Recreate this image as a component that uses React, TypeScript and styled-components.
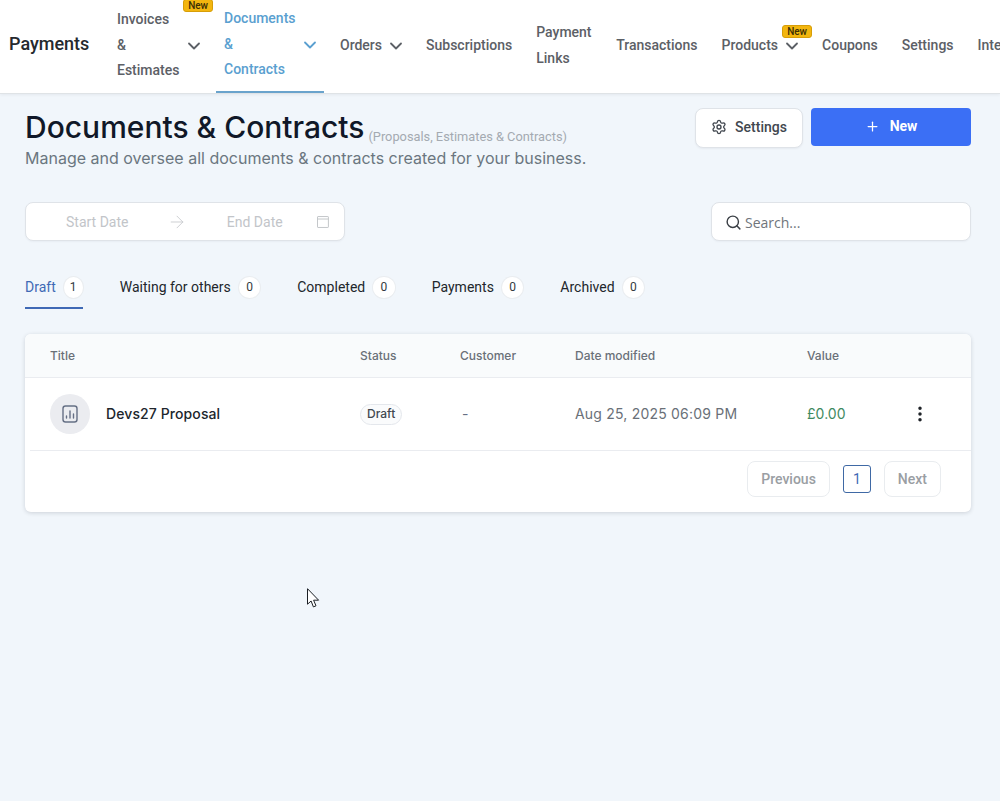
import React from "react";
import styled, { createGlobalStyle } from "styled-components";
import { ChevronDown, Settings, Plus, Search, ArrowRight, EllipsisVertical } from "lucide-react";

const GlobalStyle = createGlobalStyle`
  html, body {
    margin: 0;
    padding: 0;
    background: #f1f6fb;
  }
  body {
    font-family: "Inter", "Liberation Sans", sans-serif;
    overflow: hidden;
  }
  * {
    box-sizing: border-box;
  }
`;

const Page = styled.div`
  position: relative;
  width: 1000px;
  height: 801px;
  overflow: hidden;
  background: #f1f6fb;
`;

const TopBar = styled.nav`
  display: flex;
  align-items: stretch;
  height: 94px;
  padding-left: 9px;
  background: #ffffff;
  border-bottom: 1px solid #dfe3e6;
  box-shadow: 0 1px 3px rgba(16, 24, 40, 0.06);
  white-space: nowrap;
  overflow: hidden;
`;

const Brand = styled.div`
  display: flex;
  align-items: center;
  width: 100px;
  flex: none;
  padding-bottom: 7px;
  font-family: "Roboto", sans-serif;
  font-size: 18px;
  font-weight: 500;
  color: #25292e;
`;

const NavList = styled.div`
  display: flex;
  align-items: stretch;
  gap: 8px;
`;

const NavItem = styled.div<{ $active?: boolean }>`
  position: relative;
  display: flex;
  align-items: center;
  flex: none;
  padding: 0 8px ${(p) => (p.$active ? "2px" : "0")};
  font-family: "Roboto", sans-serif;
  font-size: 14px;
  font-weight: 500;
  line-height: 25.5px;
  color: ${(p) => (p.$active ? "#5a9fd0" : "#5c6066")};
  border-bottom: 2px solid ${(p) => (p.$active ? "#6aa3cc" : "transparent")};
`;

const NavText = styled.span<{ $width?: number }>`
  display: block;
  width: ${(p) => (p.$width ? `${p.$width}px` : "auto")};
  white-space: ${(p) => (p.$width ? "normal" : "nowrap")};
`;

const NavChevron = styled(ChevronDown)`
  flex: none;
  margin-left: 4px;
  margin-right: -4px;
`;

const NewBadge = styled.span<{ $top: number; $right: number }>`
  position: absolute;
  top: ${(p) => p.$top}px;
  right: ${(p) => p.$right}px;
  height: 13px;
  padding: 0 4px;
  border-radius: 3px;
  border: 1px solid #d79e08;
  background: #f3b60f;
  color: #3b2f05;
  font-family: "Roboto", sans-serif;
  font-size: 10px;
  font-weight: 500;
  line-height: 11px;
`;

const Content = styled.main`
  padding: 14px 29px 0 25px;
`;

const HeaderRow = styled.div`
  display: flex;
  justify-content: space-between;
  align-items: flex-start;
`;

const TitleBlock = styled.div`
  display: flex;
  flex-direction: column;
`;

const TitleLine = styled.div`
  display: flex;
  align-items: flex-end;
  gap: 4px;
  height: 38px;
`;

const PageTitle = styled.h1`
  margin: 0;
  font-size: 30px;
  font-weight: 500;
  line-height: 38px;
  color: #101828;
  letter-spacing: 0;
`;

const TitleNote = styled.span`
  margin-bottom: 2px;
  font-family: "Roboto", sans-serif;
  font-size: 12.8px;
  line-height: 14px;
  color: #a4aab1;
`;

const Description = styled.p`
  margin: 2px 0 0;
  font-size: 16px;
  line-height: 20px;
  color: #6b7680;
`;

const HeaderActions = styled.div`
  display: flex;
  align-items: flex-start;
  gap: 8px;
`;

const SettingsButton = styled.button`
  display: flex;
  align-items: center;
  justify-content: center;
  gap: 8px;
  width: 108px;
  height: 40px;
  padding: 0 0 2px;
  border: 1px solid #dfe3e8;
  border-radius: 8px;
  background: #ffffff;
  color: #41474f;
  font-family: "Roboto", sans-serif;
  font-size: 14px;
  font-weight: 500;
  box-shadow: 0 1px 2px rgba(16, 24, 40, 0.05);
`;

const NewButton = styled.button`
  display: flex;
  align-items: center;
  justify-content: center;
  gap: 10px;
  width: 160px;
  height: 38px;
  padding: 0 0 2px;
  border: none;
  border-radius: 4px;
  background: #3b6ff5;
  color: #ffffff;
  font-family: "Roboto", sans-serif;
  font-size: 14px;
  font-weight: 700;
`;

const FilterRow = styled.div`
  display: flex;
  justify-content: space-between;
  align-items: flex-start;
  margin-top: 34px;
`;

const DateRange = styled.div`
  display: flex;
  align-items: center;
  width: 320px;
  height: 39px;
  padding: 0 14px 0 40px;
  background: #ffffff;
  border: 1px solid #dfe3e8;
  border-radius: 8px;
  box-shadow: 0 1px 2px rgba(16, 24, 40, 0.04);
  font-family: "Roboto", sans-serif;
  font-size: 14px;
  color: #c2c5c9;
`;

const DateLabel = styled.span<{ $width: number }>`
  width: ${(p) => p.$width}px;
`;

const DateArrow = styled(ArrowRight)`
  flex: none;
  margin-right: 40px;
  color: #c4c7ca;
`;

const SearchBox = styled.div`
  display: flex;
  align-items: center;
  gap: 3px;
  width: 260px;
  height: 39px;
  padding: 1px 13px 0;
  background: #ffffff;
  border: 1px solid #dfe3e8;
  border-radius: 8px;
  box-shadow: 0 1px 2px rgba(16, 24, 40, 0.04);
  font-family: "Open Sans", sans-serif;
  font-size: 14px;
  color: #70757b;
`;

const TabBar = styled.div`
  display: flex;
  gap: 37px;
  margin-top: 27px;
`;

const Tab = styled.div<{ $active?: boolean }>`
  display: flex;
  align-items: center;
  gap: 8px;
  height: 41px;
  padding-bottom: 1px;
  font-family: "Roboto", sans-serif;
  font-size: 14px;
  color: ${(p) => (p.$active ? "#3f69b5" : "#22262b")};
  border-bottom: 2px solid ${(p) => (p.$active ? "#3f69b5" : "transparent")};
`;

const TabCount = styled.span<{ $narrow?: boolean }>`
  display: flex;
  align-items: center;
  justify-content: center;
  width: ${(p) => (p.$narrow ? "19px" : "21.5px")};
  height: 21px;
  border-radius: 50%;
  background: #ffffff;
  box-shadow: 0 0 0 1px #eaedf0;
  font-size: 12px;
  color: #333a40;
`;

const Card = styled.section`
  width: 946px;
  height: 178px;
  margin-top: 25px;
  background: #ffffff;
  border-radius: 6px;
  box-shadow: 0 1px 4px rgba(16, 24, 40, 0.16);
  overflow: hidden;
`;

const TableGrid = styled.div`
  display: grid;
  grid-template-columns: 310px 100px 115px 232px 94px 1fr;
  align-items: center;
  padding-left: 25px;
`;

const TableHead = styled(TableGrid)`
  height: 44px;
  background: #f9fbfc;
  border-bottom: 1px solid #eaecf0;
  font-size: 12px;
  font-weight: 500;
  color: #6a7078;
`;

const TableRow = styled(TableGrid)`
  height: 73px;
  margin-left: 5px;
  padding-left: 20px;
  border-bottom: 1px solid #eaecf0;
  font-size: 14px;
  line-height: 16px;
`;

const RowText = styled.span`
  padding-bottom: 1px;
`;

const TitleCell = styled.div`
  display: flex;
  align-items: center;
  gap: 16px;
  font-weight: 500;
  color: #20262c;
  letter-spacing: 0.1px;
`;

const FileIcon = styled.span`
  display: flex;
  align-items: center;
  justify-content: center;
  width: 40px;
  height: 40px;
  border-radius: 50%;
  background: #ebecf0;
  color: #667085;
`;

const StatusPill = styled.span`
  display: inline-block;
  padding: 0 6px;
  height: 21px;
  border: 1px solid #e4e7ec;
  border-radius: 11px;
  background: #fafbfc;
  font-size: 12px;
  font-weight: 500;
  line-height: 18px;
  color: #414850;
`;

const MutedCell = styled(RowText)`
  margin-left: 2px;
  color: #667085;
`;

const DateCell = styled(RowText)`
  color: #6a7078;
  letter-spacing: 0.2px;
`;

const ValueCell = styled(RowText)`
  color: #3f8a5f;
  letter-spacing: 0.05px;
`;

const RowMenu = styled(EllipsisVertical)`
  margin-left: 9px;
  color: #1f2328;
`;

const Pager = styled.div`
  display: flex;
  justify-content: flex-end;
  align-items: center;
  gap: 13px;
  height: 55px;
  padding-right: 30px;
`;

const PagerButton = styled.div`
  display: flex;
  align-items: center;
  justify-content: center;
  height: 36px;
  padding: 0 13px;
  border: 1px solid #e9ecef;
  border-radius: 8px;
  font-family: "Roboto", sans-serif;
  font-size: 14px;
  font-weight: 500;
  color: #9a9ea3;
`;

const PagerCurrent = styled.div`
  display: flex;
  align-items: center;
  justify-content: center;
  width: 28px;
  height: 28px;
  border: 1px solid #3f69a5;
  border-radius: 3px;
  font-family: "Roboto", sans-serif;
  font-size: 14px;
  color: #3f69b5;
`;

const Cursor = styled.svg`
  position: absolute;
  left: 307px;
  top: 588px;
`;

const tabs = [
  { label: "Draft", count: 1, active: true },
  { label: "Waiting for others", count: 0 },
  { label: "Completed", count: 0 },
  { label: "Payments", count: 0 },
  { label: "Archived", count: 0 },
];

export default function App() {
  return (
    <Page>
      <GlobalStyle />
      <TopBar>
        <Brand>Payments</Brand>
        <NavList>
          <NavItem>
            <NavText $width={63}>Invoices &amp; Estimates</NavText>
            <NavChevron size={20} strokeWidth={2.2} />
            <NewBadge $top={-1} $right={-5}>New</NewBadge>
          </NavItem>
          <NavItem $active>
            <NavText $width={72}>Documents &amp; Contracts</NavText>
            <NavChevron size={20} strokeWidth={2.2} />
          </NavItem>
          <NavItem>
            <NavText>Orders</NavText>
            <NavChevron size={20} strokeWidth={2.2} />
          </NavItem>
          <NavItem>
            <NavText>Subscriptions</NavText>
          </NavItem>
          <NavItem>
            <NavText $width={56}>Payment Links</NavText>
          </NavItem>
          <NavItem>
            <NavText>Transactions</NavText>
          </NavItem>
          <NavItem>
            <NavText>Products</NavText>
            <NavChevron size={20} strokeWidth={2.2} />
            <NewBadge $top={25} $right={-6}>New</NewBadge>
          </NavItem>
          <NavItem>
            <NavText>Coupons</NavText>
          </NavItem>
          <NavItem>
            <NavText>Settings</NavText>
          </NavItem>
          <NavItem>
            <NavText>Integrations</NavText>
          </NavItem>
        </NavList>
      </TopBar>

      <Content>
        <HeaderRow>
          <TitleBlock>
            <TitleLine>
              <PageTitle>Documents &amp; Contracts</PageTitle>
              <TitleNote>(Proposals, Estimates &amp; Contracts)</TitleNote>
            </TitleLine>
            <Description>Manage and oversee all documents &amp; contracts created for your business.</Description>
          </TitleBlock>
          <HeaderActions>
            <SettingsButton>
              <Settings size={16} />
              Settings
            </SettingsButton>
            <NewButton>
              <Plus size={15} />
              New
            </NewButton>
          </HeaderActions>
        </HeaderRow>

        <FilterRow>
          <DateRange>
            <DateLabel $width={101.5}>Start Date</DateLabel>
            <DateArrow size={20} strokeWidth={1} />
            <DateLabel $width={90}>End Date</DateLabel>
            <svg width="14" height="14" viewBox="0 0 14 14" fill="none" stroke="#c4c7ca">
              <rect x="1.5" y="1.5" width="11" height="11" rx="0.5" />
              <path d="M1.5 4h11" />
            </svg>
          </DateRange>
          <SearchBox>
            <Search size={17} color="#3a3f45" />
            Search...
          </SearchBox>
        </FilterRow>

        <TabBar>
          {tabs.map((t) => (
            <Tab key={t.label} $active={t.active}>
              {t.label}
              <TabCount $narrow={t.count > 0}>{t.count}</TabCount>
            </Tab>
          ))}
        </TabBar>

        <Card>
          <TableHead>
            <span>Title</span>
            <span>Status</span>
            <span>Customer</span>
            <span>Date modified</span>
            <span>Value</span>
          </TableHead>
          <TableRow>
            <TitleCell>
              <FileIcon>
                <svg width="18" height="20" viewBox="0 0 18 20" fill="none" stroke="currentColor" strokeWidth="1.4" strokeLinecap="round">
                  <rect x="2" y="2" width="14" height="16" rx="2.5" />
                  <path d="M5.5 14v-2M9 14V7M12.5 14v-4" />
                </svg>
              </FileIcon>
              <RowText>Devs27 Proposal</RowText>
            </TitleCell>
            <div>
              <StatusPill>Draft</StatusPill>
            </div>
            <MutedCell>-</MutedCell>
            <DateCell>Aug 25, 2025 06:09 PM</DateCell>
            <ValueCell>£0.00</ValueCell>
            <RowMenu size={20} strokeWidth={2.2} />
          </TableRow>
          <Pager>
            <PagerButton>Previous</PagerButton>
            <PagerCurrent>1</PagerCurrent>
            <PagerButton>Next</PagerButton>
          </Pager>
        </Card>
      </Content>

      <Cursor width="13" height="21" viewBox="0 0 13 21">
        <path d="M0.5 0.7V16.2L4.1 13L6.4 18.9L9 17.8L6.6 12.2H11.6Z" fill="#ffffff" stroke="#1b1f24" strokeWidth="1" />
      </Cursor>
    </Page>
  );
}
